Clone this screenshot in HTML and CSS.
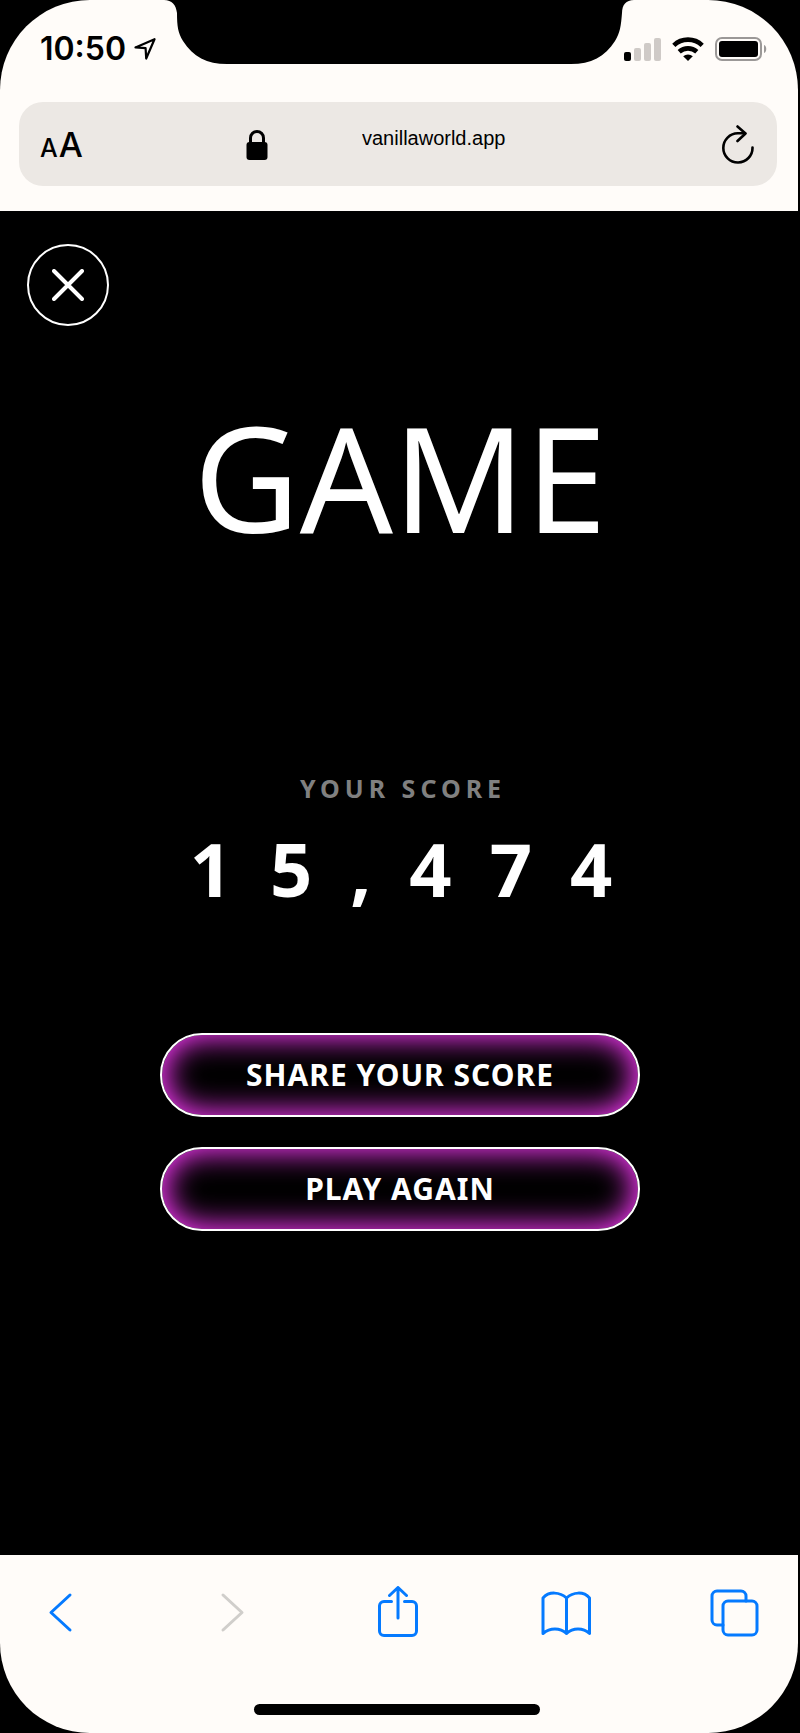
FILE: index.html
```html
<!DOCTYPE html>
<html lang="en">
<head>
<meta charset="utf-8">
<meta name="viewport" content="width=device-width, initial-scale=1">
<title>Game score</title>
<link rel="stylesheet" href="styles.css">
</head>
<body>
<div class="phone">
  <header class="browser-top">
    <div class="status">
      <div class="status-time">
        <span>10:50</span>
        <svg width="22" height="22" viewBox="0 0 22 22" aria-hidden="true"><path d="M1.500 9.400 20.500 1.200 12.200 20.500 11.600 10.200Z" fill="none" stroke="#000" stroke-width="2.200" stroke-linejoin="round"/></svg>
      </div>
      <svg class="notch" width="470" height="64" viewBox="0 0 470 64" aria-hidden="true"><path d="M0 0C8 0 12 5 13 13C13 26 14 33 19 41C29 57 43 64 63 64H407C427 64 441 57 451 41C456 33 457 26 458 13C458 5 462 0 470 0Z"/></svg>
      <div class="status-icons">
        <svg width="37" height="24" viewBox="0 0 37 24" aria-hidden="true"><rect y="15" width="7" height="9" rx="2"/><g fill="#cfcac7"><rect x="10" y="11" width="7" height="13" rx="2"/><rect x="20" y="6" width="7" height="18" rx="2"/><rect x="30" y="1" width="7" height="23" rx="2"/></g></svg>
        <svg width="32" height="24" viewBox="0 0 32 24" aria-hidden="true"><g fill="none" stroke="#000" stroke-width="4.600"><path d="M1.800 8.300a20.500 20.500 0 0 1 28.400 0"/><path d="M7.200 14.800a13 13 0 0 1 17.600 0"/></g><path d="M11.200 19.200a7.400 7.400 0 0 1 9.600 0L16 24Z"/></svg>
        <svg width="52" height="24" viewBox="0 0 52 24" aria-hidden="true"><rect x="1" y="1" width="45" height="22" rx="6" fill="none" stroke="#9b9897" stroke-width="2"/><rect x="4" y="4" width="39" height="16" rx="3"/><path d="M49 8c3 1 3 7 0 8Z" fill="#9b9897"/></svg>
      </div>
    </div>
    <div class="address">
      <button class="text-size" aria-label="Text size"><span class="small-a">A</span><span class="large-a">A</span></button>
      <svg class="lock" width="22" height="31" viewBox="0 0 22 31" aria-hidden="true"><path d="M4.500 14V9a6.500 6.500 0 0 1 13 0v5" fill="none" stroke="#000" stroke-width="3"/><rect x=".5" y="13" width="21" height="18" rx="3"/></svg>
      <input class="url" type="text" aria-label="Address" value="vanillaworld.app">
      <button class="reload" aria-label="Reload"><svg width="32" height="39" viewBox="0 0 32 39" fill="none" stroke="#000" stroke-width="2.600" stroke-linecap="round" stroke-linejoin="round"><path d="M30.500 22.500A14.600 14.600 0 1 1 16 8.300H23"/><path d="m15.500 1.500 8 7-8 7.500"/></svg></button>
    </div>
  </header>

  <main class="game">
    <button class="close" aria-label="Close"><svg width="32" height="32" viewBox="0 0 32 32"><path d="m2 2 28 28M30 2 2 30" stroke="#fff" stroke-width="4" stroke-linecap="round"/></svg></button>
    <h1 class="title">GAME</h1>
    <p class="score-label">YOUR SCORE</p>
    <p class="score">15,474</p>
    <div class="actions">
      <button class="glow">SHARE YOUR SCORE</button>
      <button class="glow">PLAY AGAIN</button>
    </div>
  </main>

  <footer class="browser-bottom">
    <nav class="tools" aria-label="Browser">
      <button aria-label="Back"><svg width="50" height="52" viewBox="0 0 50 52"><path d="M35 9 16 26.500 35 44"/></svg></button>
      <button aria-label="Forward" disabled><svg width="50" height="52" viewBox="0 0 50 52"><path d="M19 9 38 26.500 19 44"/></svg></button>
      <button aria-label="Share"><svg width="50" height="52" viewBox="0 0 50 52"><path d="M19.500 15.500H12a4.500 4.500 0 0 0-4.500 4.500v25a4.500 4.500 0 0 0 4.500 4.500h28a4.500 4.500 0 0 0 4.500-4.500V20a4.500 4.500 0 0 0-4.500-4.500H32.500M26 32V2M17.500 9.500 26 1.500l8.500 8"/></svg></button>
      <button aria-label="Bookmarks"><svg width="50" height="52" viewBox="0 0 50 52"><path d="M25.500 12v35.500M25.500 12C19 6 8 5 2 12v35.500c7-6 17-6 23.500 0C32 41.500 42 41.500 48.500 47.500V12C42.500 5 32 6 25.500 12"/></svg></button>
      <button aria-label="Tabs"><svg width="50" height="52" viewBox="0 0 50 52"><rect x="14" y="15" width="34" height="34" rx="5"/><path d="M14 39H8a5 5 0 0 1-5-5V10a5 5 0 0 1 5-5h24a5 5 0 0 1 5 5v5"/></svg></button>
    </nav>
    <div class="home"></div>
  </footer>
</div>
</body>
</html>
```
FILE: styles.css
```css
* { box-sizing: border-box; }
body { margin: 0; background: #000; }
button { padding: 0; border: 0; background: none; color: inherit; cursor: pointer; }
svg { display: block; }

.phone { min-height: 100vh; display: flex; flex-direction: column; }

.browser-top {
  margin-right: 2px;
  padding-bottom: 25px;
  background: #fffcf9;
  border-radius: 90px 90px 0 0;
}
.status {
  display: grid;
  grid-template-columns: 1fr auto 1fr;
  height: 102px;
}
.status-time {
  display: flex;
  align-items: center;
  justify-content: flex-end;
  gap: 8px;
  padding-right: 8px;
  font: 600 32px/36px Inter, sans-serif;
}
.status-time, .status-icons { height: 98px; }
.status-icons {
  display: flex;
  align-items: center;
  justify-content: flex-end;
  gap: 11px;
  padding-right: 31px;
  margin-left: -20px;
}

.address {
  display: flex;
  align-items: center;
  height: 84px;
  margin: 0 21px 0 19px;
  padding: 0 23px 0 21px;
  background: #ece8e4;
  border-radius: 24px;
}
.text-size {
  display: flex;
  align-items: baseline;
  gap: 1px;
  width: 206px;
  padding-top: 4px;
  font-family: Inter, sans-serif;
  font-weight: 500;
  line-height: 40px;
}
.small-a { font-size: 25px; }
.large-a { font-size: 34px; }
.url {
  flex: 1;
  min-width: 0;
  margin: 0 20px 12px 94px;
  padding: 0;
  border: 0;
  outline: 0;
  background: none;
  color: #000;
  font: 20px/24px "Liberation Sans", Arial, sans-serif;
}

.game {
  flex: 1;
  display: flex;
  flex-direction: column;
  align-items: center;
  padding: 33px 27px;
  color: #fff;
  font-family: "Noto Sans", sans-serif;
  text-align: center;
}
.close {
  display: grid;
  place-items: center;
  align-self: flex-start;
  width: 82px;
  height: 82px;
  border: 2px solid #fff;
  border-radius: 50%;
}
.title {
  margin: 51px 0 0;
  font-size: 146px;
  font-weight: 400;
  line-height: 200px;
}
.score-label {
  margin: 194px 0 0;
  padding-left: 6px;
  color: #808080;
  font-size: 25px;
  font-weight: 700;
  line-height: 34px;
  letter-spacing: 5px;
}
.score {
  margin: 14px 0 0;
  padding-left: 40px;
  font-size: 74px;
  font-weight: 700;
  line-height: 100px;
  letter-spacing: 38px;
}
.actions {
  display: grid;
  gap: 30px;
  width: 100%;
  max-width: 480px;
  margin-top: 114px;
}
.glow {
  height: 84px;
  border: 2px solid #fff;
  border-radius: 42px;
  background: #000;
  box-shadow: inset 0 0 30px 3px #ff3aff;
  font: 700 30px/40px "Noto Sans", sans-serif;
  letter-spacing: 1px;
}

.browser-bottom {
  margin-right: 2px;
  padding: 31px 39px 18px 35px;
  background: #fffcf9;
  border-radius: 0 0 90px 90px;
}
.tools { display: flex; justify-content: space-between; }
.tools svg { fill: none; stroke: #057aff; stroke-width: 3; stroke-linecap: round; stroke-linejoin: round; }
.tools button:disabled svg { stroke: #d0cecb; }
.home {
  width: 286px;
  height: 11px;
  margin: 66px auto 0;
  border-radius: 6px;
  background: #000;
}
```
